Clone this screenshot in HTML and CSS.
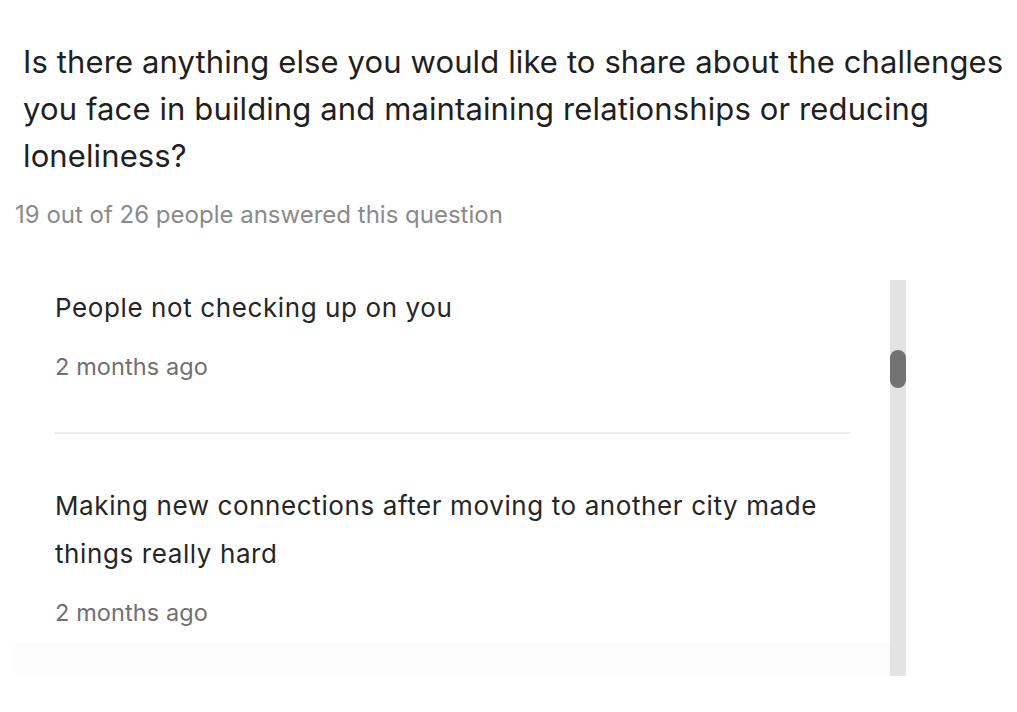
FILE: index.html
```html
<!DOCTYPE html>
<html>
<head>
<meta charset="utf-8">
<link rel="stylesheet" href="styles.css">
</head>
<body>
<div class="page">
  <h1 class="question">Is there anything else you would like to share about the challenges you face in building and maintaining relationships or reducing loneliness?</h1>
  <p class="meta">19 out of 26 people answered this question</p>
  <div class="answers">
    <div class="list">
      <div class="answer">
        <p class="text">People not checking up on you</p>
        <p class="date">2 months ago</p>
      </div>
      <div class="answer">
        <p class="text">Making new connections after moving to another city made things really hard</p>
        <p class="date">2 months ago</p>
      </div>
      <div class="fade"></div>
    </div>
    <div class="scrollbar"><div class="thumb"></div></div>
  </div>
</div>
</body>
</html>
```
FILE: styles.css
```css
* { box-sizing: border-box; }
html, body { margin: 0; background: #fff; }
body { font-family: Inter, "Noto Sans", sans-serif; color: #222; }
.page { padding: 38px 0 0 15px; width: 1017px; }
.question {
  margin: 0 0 0 8px;
  width: 990px;
  font-size: 31px;
  font-weight: 400;
  line-height: 47px;
  color: #1f1f1f;
  letter-spacing: 0.12px;
}
.meta {
  margin: 22px 0 0 0;
  font-size: 24px;
  line-height: 28px;
  color: #8a8a8a;
}
.answers {
  margin-top: 51px;
  display: flex;
  width: 891px;
  height: 396px;
  overflow: hidden;
}
.list {
  flex: 1;
  position: relative;
  padding: 0 40px 0 40px;
}
.answer { padding: 4px 0 0 0; }
.answer + .answer { border-top: 2px solid #eeeeee; padding-top: 48px; }
.text {
  margin: 0;
  font-size: 26px;
  line-height: 48px;
  color: #262626;
  letter-spacing: 0.6px;
}
.date {
  margin: 20px 0 50px 0;
  font-size: 23.5px;
  line-height: 30px;
  color: #707070;
  letter-spacing: 0.1px;
}
.fade {
  position: absolute;
  left: 0; right: 0; bottom: 0;
  height: 33px;
  background: #fcfcfc;
}
.scrollbar {
  width: 16px;
  background: #e3e3e3;
  position: relative;
}
.thumb {
  position: absolute;
  left: 0; top: 70px;
  width: 16px; height: 38px;
  border-radius: 8px;
  background: #737373;
}
```
